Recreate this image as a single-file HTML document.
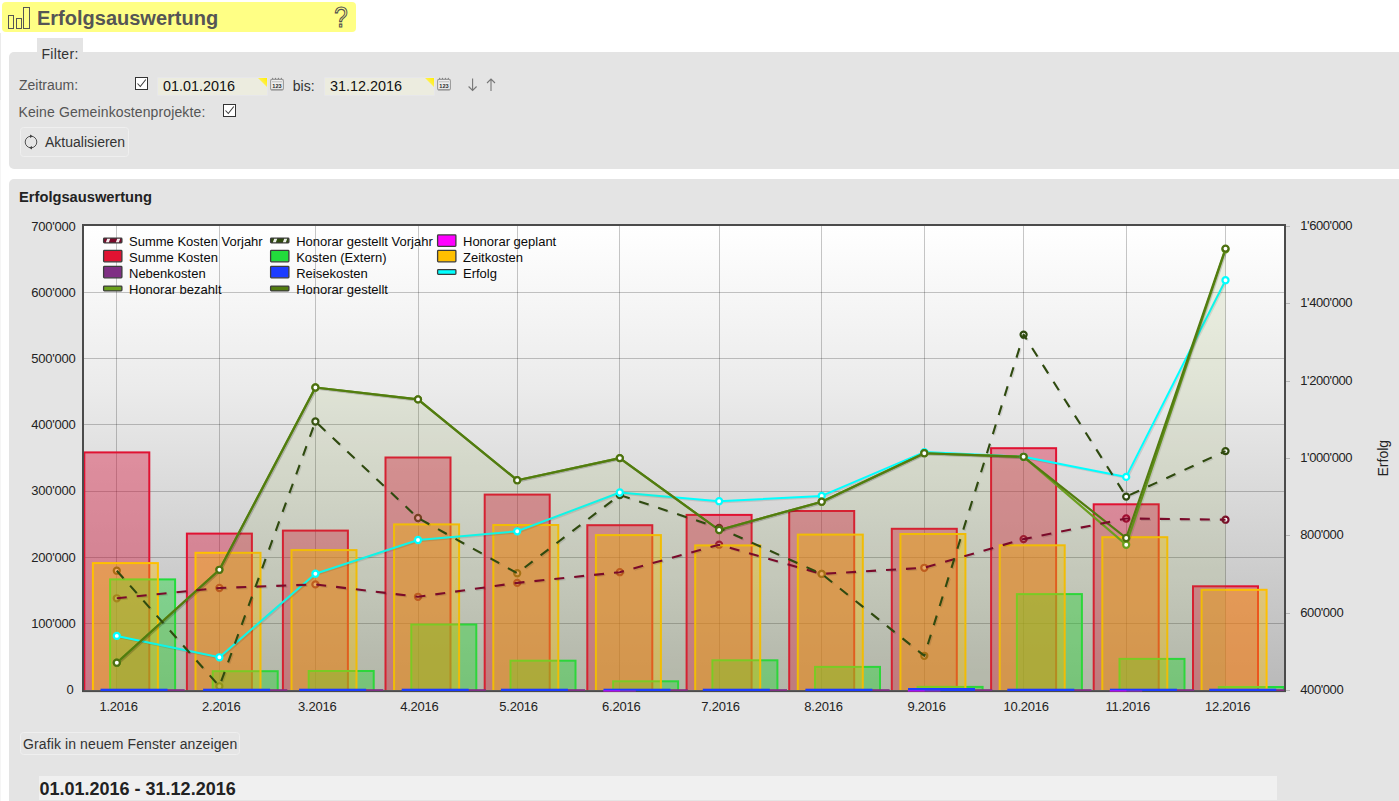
<!DOCTYPE html>
<html lang="de"><head><meta charset="utf-8"><title>Erfolgsauswertung</title>
<style>
html,body{margin:0;padding:0;background:#fff;}
body{width:1399px;height:801px;overflow:hidden;position:relative;font-family:"Liberation Sans", sans-serif;font-size:14px;color:#555;}
.abs{position:absolute;}
.hdr{left:2px;top:2px;width:354px;height:30px;background:#ffff85;border-radius:4px;}
.hdr h1{position:absolute;left:35px;top:4.5px;margin:0;font-size:20px;line-height:23px;font-weight:bold;color:#555;white-space:nowrap;}
.tab{left:37px;top:38px;width:46px;height:16px;background:#e4e4e4;}
.panel{left:9px;background:#e4e4e4;border-radius:5px 0 0 5px;right:0;}
.lbl{white-space:nowrap;line-height:16px;}
.inp{background:#ececdf;height:17.3px;width:109.3px;box-shadow:0 0 0 0.6px #e9e9ee;color:#111;line-height:18px;font-size:14.4px;}
.inp span{position:absolute;left:4.8px;top:-0.7px;}
.inp i{position:absolute;right:0;top:0;width:9.6px;height:9.2px;background:linear-gradient(to bottom left,#ffee00 0%,#fff04a 49%,transparent 51%);}
.cb{width:11px;height:11px;border:1px solid #333;background:#fff;}
.btn{border:1px solid #efefef;border-radius:3.5px;background:#e5e5e5;color:#333;white-space:nowrap;box-sizing:border-box;}
</style></head><body>
<div class="abs" style="left:0;top:33px;width:1px;height:67px;background:#ebebeb"></div><div class="abs" style="left:0;top:100px;width:1px;height:701px;background:#f5f5f5"></div>
<div class="abs hdr">
<svg class="abs" style="left:5px;top:4px" width="26" height="24" viewBox="0 0 26 24"><g fill="none" stroke="#555" stroke-width="1"><rect x="1.5" y="9.5" width="5" height="13"/><rect x="9.5" y="12.5" width="5" height="10"/><rect x="16.5" y="1.5" width="6" height="21"/></g></svg>
<h1>Erfolgsauswertung</h1>
<svg class="abs" style="left:328px;top:1px;overflow:visible" width="24" height="29" viewBox="0 0 24 29"><text transform="translate(10.9,23.6) scale(0.82,1.0)" text-anchor="middle" font-family='"Liberation Sans", sans-serif' font-size="29.5" fill="none" stroke="#505050" stroke-width="1.15">?</text></svg>
</div>
<div class="abs tab"></div>
<div class="abs panel" style="top:52px;height:116.7px"></div>
<div class="abs lbl" style="left:41.5px;top:46px;color:#333;letter-spacing:0.3px">Filter:</div>
<div class="abs lbl" style="left:19px;top:77px">Zeitraum:</div>
<div class="abs cb" style="left:135px;top:77px"><svg width="11" height="11" viewBox="0 0 11 11" style="display:block"><path d="M1.5 5.5 L4.3 8.5 L9.8 1.5" fill="none" stroke="#3a3a3a" stroke-width="1.05"/></svg></div>
<div class="abs inp" style="left:158.2px;top:77.9px"><span>01.01.2016</span><i></i></div>
<svg class="abs cal" style="left:270px;top:77px" width="14" height="14" viewBox="0 0 14 14"><path d="M1.8 2.6l0.9-2.2l0.9 2.2zM4.6 2.6l0.9-2.2l0.9 2.2zM7.5 2.6l0.9-2.2l0.9 2.2zM10.4 2.6l0.9-2.2l0.9 2.2z" fill="#666"/><rect x="0.6" y="2.4" width="12.8" height="10.6" rx="1.4" fill="#efefef" stroke="#9a9a9a" stroke-width="1.1"/><path d="M1.2 12.6h11.6" stroke="#9a9a9a" stroke-width="1.4"/><path d="M2 4.8h10" stroke="#b5b5b5" stroke-width="0.9"/><text x="7" y="10.9" text-anchor="middle" font-family='"Liberation Sans", sans-serif' font-size="5.6" font-weight="bold" fill="#2a2a2a">123</text></svg>
<div class="abs lbl" style="left:292.8px;top:78px;color:#333">bis:</div>
<div class="abs inp" style="left:325.2px;top:77.9px"><span>31.12.2016</span><i></i></div>
<svg class="abs cal" style="left:437px;top:77px" width="14" height="14" viewBox="0 0 14 14"><path d="M1.8 2.6l0.9-2.2l0.9 2.2zM4.6 2.6l0.9-2.2l0.9 2.2zM7.5 2.6l0.9-2.2l0.9 2.2zM10.4 2.6l0.9-2.2l0.9 2.2z" fill="#666"/><rect x="0.6" y="2.4" width="12.8" height="10.6" rx="1.4" fill="#efefef" stroke="#9a9a9a" stroke-width="1.1"/><path d="M1.2 12.6h11.6" stroke="#9a9a9a" stroke-width="1.4"/><path d="M2 4.8h10" stroke="#b5b5b5" stroke-width="0.9"/><text x="7" y="10.9" text-anchor="middle" font-family='"Liberation Sans", sans-serif' font-size="5.6" font-weight="bold" fill="#2a2a2a">123</text></svg>
<svg class="abs" style="left:466px;top:77px" width="32" height="16" viewBox="0 0 32 16"><g fill="none" stroke="#777" stroke-width="1.1"><path d="M6.6 1.5v12M2.6 9.5l4 4l4-4"/><path d="M25 14V2M21 6l4-4l4 4"/></g></svg>
<div class="abs lbl" style="left:18.5px;top:103.5px;letter-spacing:0.12px">Keine Gemeinkostenprojekte:</div>
<div class="abs cb" style="left:223px;top:104px"><svg width="11" height="11" viewBox="0 0 11 11" style="display:block"><path d="M1.5 5.5 L4.3 8.5 L9.8 1.5" fill="none" stroke="#3a3a3a" stroke-width="1.05"/></svg></div>
<div class="abs btn" style="left:20px;top:127px;width:109px;height:30px"><svg class="abs" style="left:2px;top:5.7px" width="16" height="16" viewBox="0 0 16 16"><circle cx="8" cy="8" r="5.8" fill="none" stroke="#4a4a4a" stroke-width="0.95"/><path d="M7.0 0.5l2.9 1.8l-2.9 1.8z M9.0 11.9l-2.9 1.8l2.9 1.8z" fill="#444"/></svg><span class="abs" style="left:24px;top:6px;line-height:16px">Aktualisieren</span></div>
<div class="abs panel" style="top:179px;height:640px"></div>
<div class="abs lbl" style="left:19px;top:189px;font-weight:bold;color:#222;font-size:14.7px">Erfolgsauswertung</div>
<svg width="1399" height="801" viewBox="0 0 1399 801" style="position:absolute;left:0;top:0" font-family='"Liberation Sans", sans-serif' font-size="12">
<defs>
<linearGradient id="bg" x1="0" y1="0" x2="0" y2="1">
<stop offset="0" stop-color="#ffffff"/><stop offset="0.35" stop-color="#ebebeb"/><stop offset="1" stop-color="#b9b9b9"/>
</linearGradient>
<clipPath id="clip"><rect x="84" y="226" width="1200" height="464.2"/></clipPath>
</defs>
<rect x="84.0" y="226.0" width="1200.0" height="464.20000000000005" fill="url(#bg)"/>
<g stroke="#000" stroke-opacity="0.22" stroke-width="1"><line x1="116.5" y1="226.0" x2="116.5" y2="690.2"/><line x1="219.5" y1="226.0" x2="219.5" y2="690.2"/><line x1="315.5" y1="226.0" x2="315.5" y2="690.2"/><line x1="418.5" y1="226.0" x2="418.5" y2="690.2"/><line x1="517.5" y1="226.0" x2="517.5" y2="690.2"/><line x1="619.5" y1="226.0" x2="619.5" y2="690.2"/><line x1="719.5" y1="226.0" x2="719.5" y2="690.2"/><line x1="821.5" y1="226.0" x2="821.5" y2="690.2"/><line x1="924.5" y1="226.0" x2="924.5" y2="690.2"/><line x1="1023.5" y1="226.0" x2="1023.5" y2="690.2"/><line x1="1126.5" y1="226.0" x2="1126.5" y2="690.2"/><line x1="1225.5" y1="226.0" x2="1225.5" y2="690.2"/><line x1="84.0" y1="292.5" x2="1284.0" y2="292.5"/><line x1="84.0" y1="358.5" x2="1284.0" y2="358.5"/><line x1="84.0" y1="424.5" x2="1284.0" y2="424.5"/><line x1="84.0" y1="491.5" x2="1284.0" y2="491.5"/><line x1="84.0" y1="557.5" x2="1284.0" y2="557.5"/><line x1="84.0" y1="623.5" x2="1284.0" y2="623.5"/></g>
<g stroke="#b5b5b5" stroke-width="1" shape-rendering="crispEdges"><line x1="1286" y1="226.5" x2="1290" y2="226.5"/><line x1="1286" y1="303.5" x2="1290" y2="303.5"/><line x1="1286" y1="381.5" x2="1290" y2="381.5"/><line x1="1286" y1="458.5" x2="1290" y2="458.5"/><line x1="1286" y1="535.5" x2="1290" y2="535.5"/><line x1="1286" y1="613.5" x2="1290" y2="613.5"/><line x1="1286" y1="690.5" x2="1290" y2="690.5"/></g>
<g clip-path="url(#clip)">
<circle cx="116.8" cy="598.3" r="3.05" fill="#fff" stroke="#7a0a2a" stroke-width="2.2"/>
<circle cx="219.4" cy="588.0" r="3.05" fill="#fff" stroke="#7a0a2a" stroke-width="2.2"/>
<circle cx="315.4" cy="584.4" r="3.05" fill="#fff" stroke="#7a0a2a" stroke-width="2.2"/>
<circle cx="418.0" cy="596.8" r="3.05" fill="#fff" stroke="#7a0a2a" stroke-width="2.2"/>
<circle cx="517.2" cy="582.9" r="3.05" fill="#fff" stroke="#7a0a2a" stroke-width="2.2"/>
<circle cx="619.8" cy="572.2" r="3.05" fill="#fff" stroke="#7a0a2a" stroke-width="2.2"/>
<circle cx="719.1" cy="544.7" r="3.05" fill="#fff" stroke="#7a0a2a" stroke-width="2.2"/>
<circle cx="821.7" cy="573.9" r="3.05" fill="#fff" stroke="#7a0a2a" stroke-width="2.2"/>
<circle cx="924.3" cy="567.8" r="3.05" fill="#fff" stroke="#7a0a2a" stroke-width="2.2"/>
<circle cx="1023.6" cy="539.1" r="3.05" fill="#fff" stroke="#7a0a2a" stroke-width="2.2"/>
<circle cx="1126.2" cy="518.5" r="3.05" fill="#fff" stroke="#7a0a2a" stroke-width="2.2"/>
<circle cx="1225.5" cy="519.7" r="3.05" fill="#fff" stroke="#7a0a2a" stroke-width="2.2"/>
<circle cx="116.8" cy="570.7" r="3.05" fill="#fff" stroke="#2f4a0f" stroke-width="2.2"/>
<circle cx="219.4" cy="686.3" r="3.05" fill="#fff" stroke="#2f4a0f" stroke-width="2.2"/>
<circle cx="315.4" cy="421.5" r="3.05" fill="#fff" stroke="#2f4a0f" stroke-width="2.2"/>
<circle cx="418.0" cy="518.0" r="3.05" fill="#fff" stroke="#2f4a0f" stroke-width="2.2"/>
<circle cx="517.2" cy="573.2" r="3.05" fill="#fff" stroke="#2f4a0f" stroke-width="2.2"/>
<circle cx="619.8" cy="495.0" r="3.05" fill="#fff" stroke="#2f4a0f" stroke-width="2.2"/>
<circle cx="719.1" cy="528.0" r="3.05" fill="#fff" stroke="#2f4a0f" stroke-width="2.2"/>
<circle cx="821.7" cy="573.9" r="3.05" fill="#fff" stroke="#2f4a0f" stroke-width="2.2"/>
<circle cx="924.3" cy="655.8" r="3.05" fill="#fff" stroke="#2f4a0f" stroke-width="2.2"/>
<circle cx="1023.6" cy="334.6" r="3.05" fill="#fff" stroke="#2f4a0f" stroke-width="2.2"/>
<circle cx="1126.2" cy="496.6" r="3.05" fill="#fff" stroke="#2f4a0f" stroke-width="2.2"/>
<circle cx="1225.5" cy="451.1" r="3.05" fill="#fff" stroke="#2f4a0f" stroke-width="2.2"/>
<rect x="84.3" y="452.4" width="65.0" height="240.4" fill="#dc143c" fill-opacity="0.4" stroke="#e01232" stroke-width="2"/>
<rect x="186.9" y="533.6" width="65.0" height="159.2" fill="#dc143c" fill-opacity="0.4" stroke="#e01232" stroke-width="2"/>
<rect x="282.9" y="530.6" width="65.0" height="162.2" fill="#dc143c" fill-opacity="0.4" stroke="#e01232" stroke-width="2"/>
<rect x="385.5" y="457.5" width="65.0" height="235.3" fill="#dc143c" fill-opacity="0.4" stroke="#e01232" stroke-width="2"/>
<rect x="484.7" y="494.6" width="65.0" height="198.2" fill="#dc143c" fill-opacity="0.4" stroke="#e01232" stroke-width="2"/>
<rect x="587.3" y="525.2" width="65.0" height="167.6" fill="#dc143c" fill-opacity="0.4" stroke="#e01232" stroke-width="2"/>
<rect x="686.6" y="514.9" width="65.0" height="177.9" fill="#dc143c" fill-opacity="0.4" stroke="#e01232" stroke-width="2"/>
<rect x="789.2" y="511.0" width="65.0" height="181.8" fill="#dc143c" fill-opacity="0.4" stroke="#e01232" stroke-width="2"/>
<rect x="891.8" y="528.8" width="65.0" height="164.0" fill="#dc143c" fill-opacity="0.4" stroke="#e01232" stroke-width="2"/>
<rect x="991.1" y="448.2" width="65.0" height="244.6" fill="#dc143c" fill-opacity="0.4" stroke="#e01232" stroke-width="2"/>
<rect x="1093.7" y="504.3" width="65.0" height="188.5" fill="#dc143c" fill-opacity="0.4" stroke="#e01232" stroke-width="2"/>
<rect x="1193.0" y="586.3" width="65.0" height="106.5" fill="#dc143c" fill-opacity="0.4" stroke="#e01232" stroke-width="2"/>
<rect x="110.1" y="579.4" width="65.0" height="113.4" fill="#14dc32" fill-opacity="0.4" stroke="#22dc3c" stroke-width="2"/>
<rect x="212.7" y="671.2" width="65.0" height="21.6" fill="#14dc32" fill-opacity="0.4" stroke="#22dc3c" stroke-width="2"/>
<rect x="308.7" y="671.0" width="65.0" height="21.8" fill="#14dc32" fill-opacity="0.4" stroke="#22dc3c" stroke-width="2"/>
<rect x="411.3" y="624.5" width="65.0" height="68.3" fill="#14dc32" fill-opacity="0.4" stroke="#22dc3c" stroke-width="2"/>
<rect x="510.5" y="660.7" width="65.0" height="32.1" fill="#14dc32" fill-opacity="0.4" stroke="#22dc3c" stroke-width="2"/>
<rect x="613.1" y="681.3" width="65.0" height="11.5" fill="#14dc32" fill-opacity="0.4" stroke="#22dc3c" stroke-width="2"/>
<rect x="712.4" y="660.3" width="65.0" height="32.5" fill="#14dc32" fill-opacity="0.4" stroke="#22dc3c" stroke-width="2"/>
<rect x="815.0" y="666.9" width="65.0" height="25.9" fill="#14dc32" fill-opacity="0.4" stroke="#22dc3c" stroke-width="2"/>
<rect x="917.6" y="686.9" width="65.0" height="5.9" fill="#14dc32" fill-opacity="0.4" stroke="#22dc3c" stroke-width="2"/>
<rect x="1016.9" y="594.1" width="65.0" height="98.7" fill="#14dc32" fill-opacity="0.4" stroke="#22dc3c" stroke-width="2"/>
<rect x="1119.5" y="658.9" width="65.0" height="33.9" fill="#14dc32" fill-opacity="0.4" stroke="#22dc3c" stroke-width="2"/>
<rect x="1218.8" y="687.0" width="65.0" height="5.8" fill="#14dc32" fill-opacity="0.4" stroke="#22dc3c" stroke-width="2"/>
<rect x="92.9" y="563.1" width="65.0" height="129.7" fill="#ffbe00" fill-opacity="0.4" stroke="#ffc000" stroke-width="2"/>
<rect x="195.5" y="552.8" width="65.0" height="140.0" fill="#ffbe00" fill-opacity="0.4" stroke="#ffc000" stroke-width="2"/>
<rect x="291.5" y="550.1" width="65.0" height="142.7" fill="#ffbe00" fill-opacity="0.4" stroke="#ffc000" stroke-width="2"/>
<rect x="394.1" y="524.4" width="65.0" height="168.4" fill="#ffbe00" fill-opacity="0.4" stroke="#ffc000" stroke-width="2"/>
<rect x="493.3" y="525.0" width="65.0" height="167.8" fill="#ffbe00" fill-opacity="0.4" stroke="#ffc000" stroke-width="2"/>
<rect x="595.9" y="535.1" width="65.0" height="157.7" fill="#ffbe00" fill-opacity="0.4" stroke="#ffc000" stroke-width="2"/>
<rect x="695.2" y="545.4" width="65.0" height="147.4" fill="#ffbe00" fill-opacity="0.4" stroke="#ffc000" stroke-width="2"/>
<rect x="797.8" y="534.6" width="65.0" height="158.2" fill="#ffbe00" fill-opacity="0.4" stroke="#ffc000" stroke-width="2"/>
<rect x="900.4" y="534.0" width="65.0" height="158.8" fill="#ffbe00" fill-opacity="0.4" stroke="#ffc000" stroke-width="2"/>
<rect x="999.7" y="545.3" width="65.0" height="147.5" fill="#ffbe00" fill-opacity="0.4" stroke="#ffc000" stroke-width="2"/>
<rect x="1102.3" y="537.2" width="65.0" height="155.6" fill="#ffbe00" fill-opacity="0.4" stroke="#ffc000" stroke-width="2"/>
<rect x="1201.6" y="589.8" width="65.0" height="103.0" fill="#ffbe00" fill-opacity="0.4" stroke="#ffc000" stroke-width="2"/>
<polyline points="116.8,635.9 219.4,657.3 315.4,573.7 418.0,540.0 517.2,531.3 619.8,492.5 719.1,501.2 821.7,495.9 924.3,452.1 1023.6,456.8 1126.2,476.9 1225.5,280.2" fill="none" stroke="#000" stroke-opacity="0.10" stroke-width="2.0" transform="translate(1.2,1.2)" stroke-linejoin="round"/>
<polyline points="116.8,635.9 219.4,657.3 315.4,573.7 418.0,540.0 517.2,531.3 619.8,492.5 719.1,501.2 821.7,495.9 924.3,452.1 1023.6,456.8 1126.2,476.9 1225.5,280.2" fill="none" stroke="#00ffff" stroke-width="2.0" stroke-linejoin="round" stroke-linecap="butt"/>
<polygon points="116.8,662.7 219.4,569.8 315.4,387.5 418.0,399.4 517.2,480.2 619.8,458.1 719.1,530.0 821.7,501.7 924.3,453.2 1023.6,456.8 1126.2,544.8 1225.5,249.4 1225.5,690.2 116.8,690.2" fill="#8ca531" fill-opacity="0.06"/>
<polyline points="116.8,662.7 219.4,569.8 315.4,387.5 418.0,399.4 517.2,480.2 619.8,458.1 719.1,530.0 821.7,501.7 924.3,453.2 1023.6,456.8 1126.2,544.8 1225.5,249.4" fill="none" stroke="#000" stroke-opacity="0.10" stroke-width="2.15" transform="translate(1.2,1.2)" stroke-linejoin="round"/>
<polyline points="116.8,662.7 219.4,569.8 315.4,387.5 418.0,399.4 517.2,480.2 619.8,458.1 719.1,530.0 821.7,501.7 924.3,453.2 1023.6,456.8 1126.2,544.8 1225.5,249.4" fill="none" stroke="#6aa01c" stroke-width="2.15" stroke-linejoin="round" stroke-linecap="butt"/>
<polygon points="116.8,662.7 219.4,569.8 315.4,387.5 418.0,399.4 517.2,480.2 619.8,458.1 719.1,530.0 821.7,501.7 924.3,453.2 1023.6,456.8 1126.2,538.0 1225.5,248.6 1225.5,690.2 116.8,690.2" fill="#8ca531" fill-opacity="0.06"/>
<polyline points="116.8,662.7 219.4,569.8 315.4,387.5 418.0,399.4 517.2,480.2 619.8,458.1 719.1,530.0 821.7,501.7 924.3,453.2 1023.6,456.8 1126.2,538.0 1225.5,248.6" fill="none" stroke="#000" stroke-opacity="0.10" stroke-width="2.15" transform="translate(1.2,1.2)" stroke-linejoin="round"/>
<polyline points="116.8,662.7 219.4,569.8 315.4,387.5 418.0,399.4 517.2,480.2 619.8,458.1 719.1,530.0 821.7,501.7 924.3,453.2 1023.6,456.8 1126.2,538.0 1225.5,248.6" fill="none" stroke="#527c0f" stroke-width="2.15" stroke-linejoin="round" stroke-linecap="butt"/>
<polyline points="116.8,598.3 219.4,588.0 315.4,584.4 418.0,596.8 517.2,582.9 619.8,572.2 719.1,544.7 821.7,573.9 924.3,567.8 1023.6,539.1 1126.2,518.5 1225.5,519.7" fill="none" stroke="#000" stroke-opacity="0.10" stroke-width="2.1" transform="translate(1.2,1.2)" stroke-dasharray="10 10" stroke-linejoin="round"/>
<polyline points="116.8,598.3 219.4,588.0 315.4,584.4 418.0,596.8 517.2,582.9 619.8,572.2 719.1,544.7 821.7,573.9 924.3,567.8 1023.6,539.1 1126.2,518.5 1225.5,519.7" fill="none" stroke="#7a0a2a" stroke-width="2.1" stroke-dasharray="10 10" stroke-linejoin="round" stroke-linecap="butt"/>
<polyline points="116.8,570.7 219.4,686.3 315.4,421.5 418.0,518.0 517.2,573.2 619.8,495.0 719.1,528.0 821.7,573.9 924.3,655.8 1023.6,334.6 1126.2,496.6 1225.5,451.1" fill="none" stroke="#000" stroke-opacity="0.10" stroke-width="2.1" transform="translate(1.2,1.2)" stroke-dasharray="10 10" stroke-linejoin="round"/>
<polyline points="116.8,570.7 219.4,686.3 315.4,421.5 418.0,518.0 517.2,573.2 619.8,495.0 719.1,528.0 821.7,573.9 924.3,655.8 1023.6,334.6 1126.2,496.6 1225.5,451.1" fill="none" stroke="#2f4a0f" stroke-width="2.1" stroke-dasharray="10 10" stroke-linejoin="round" stroke-linecap="butt"/>
<circle cx="116.8" cy="635.9" r="3.05" fill="#fff" stroke="#00ffff" stroke-width="2.2"/>
<circle cx="219.4" cy="657.3" r="3.05" fill="#fff" stroke="#00ffff" stroke-width="2.2"/>
<circle cx="315.4" cy="573.7" r="3.05" fill="#fff" stroke="#00ffff" stroke-width="2.2"/>
<circle cx="418.0" cy="540.0" r="3.05" fill="#fff" stroke="#00ffff" stroke-width="2.2"/>
<circle cx="517.2" cy="531.3" r="3.05" fill="#fff" stroke="#00ffff" stroke-width="2.2"/>
<circle cx="619.8" cy="492.5" r="3.05" fill="#fff" stroke="#00ffff" stroke-width="2.2"/>
<circle cx="719.1" cy="501.2" r="3.05" fill="#fff" stroke="#00ffff" stroke-width="2.2"/>
<circle cx="821.7" cy="495.9" r="3.05" fill="#fff" stroke="#00ffff" stroke-width="2.2"/>
<circle cx="924.3" cy="452.1" r="3.05" fill="#fff" stroke="#00ffff" stroke-width="2.2"/>
<circle cx="1023.6" cy="456.8" r="3.05" fill="#fff" stroke="#00ffff" stroke-width="2.2"/>
<circle cx="1126.2" cy="476.9" r="3.05" fill="#fff" stroke="#00ffff" stroke-width="2.2"/>
<circle cx="1225.5" cy="280.2" r="3.05" fill="#fff" stroke="#00ffff" stroke-width="2.2"/>
<circle cx="116.8" cy="662.7" r="3.05" fill="#fff" stroke="#6aa01c" stroke-width="2.2"/>
<circle cx="219.4" cy="569.8" r="3.05" fill="#fff" stroke="#6aa01c" stroke-width="2.2"/>
<circle cx="315.4" cy="387.5" r="3.05" fill="#fff" stroke="#6aa01c" stroke-width="2.2"/>
<circle cx="418.0" cy="399.4" r="3.05" fill="#fff" stroke="#6aa01c" stroke-width="2.2"/>
<circle cx="517.2" cy="480.2" r="3.05" fill="#fff" stroke="#6aa01c" stroke-width="2.2"/>
<circle cx="619.8" cy="458.1" r="3.05" fill="#fff" stroke="#6aa01c" stroke-width="2.2"/>
<circle cx="719.1" cy="530.0" r="3.05" fill="#fff" stroke="#6aa01c" stroke-width="2.2"/>
<circle cx="821.7" cy="501.7" r="3.05" fill="#fff" stroke="#6aa01c" stroke-width="2.2"/>
<circle cx="924.3" cy="453.2" r="3.05" fill="#fff" stroke="#6aa01c" stroke-width="2.2"/>
<circle cx="1023.6" cy="456.8" r="3.05" fill="#fff" stroke="#6aa01c" stroke-width="2.2"/>
<circle cx="1126.2" cy="544.8" r="3.05" fill="#fff" stroke="#6aa01c" stroke-width="2.2"/>
<circle cx="1225.5" cy="249.4" r="3.05" fill="#fff" stroke="#6aa01c" stroke-width="2.2"/>
<circle cx="116.8" cy="662.7" r="3.05" fill="#fff" stroke="#4d7010" stroke-width="2.2"/>
<circle cx="219.4" cy="569.8" r="3.05" fill="#fff" stroke="#4d7010" stroke-width="2.2"/>
<circle cx="315.4" cy="387.5" r="3.05" fill="#fff" stroke="#4d7010" stroke-width="2.2"/>
<circle cx="418.0" cy="399.4" r="3.05" fill="#fff" stroke="#4d7010" stroke-width="2.2"/>
<circle cx="517.2" cy="480.2" r="3.05" fill="#fff" stroke="#4d7010" stroke-width="2.2"/>
<circle cx="619.8" cy="458.1" r="3.05" fill="#fff" stroke="#4d7010" stroke-width="2.2"/>
<circle cx="719.1" cy="530.0" r="3.05" fill="#fff" stroke="#4d7010" stroke-width="2.2"/>
<circle cx="821.7" cy="501.7" r="3.05" fill="#fff" stroke="#4d7010" stroke-width="2.2"/>
<circle cx="924.3" cy="453.2" r="3.05" fill="#fff" stroke="#4d7010" stroke-width="2.2"/>
<circle cx="1023.6" cy="456.8" r="3.05" fill="#fff" stroke="#4d7010" stroke-width="2.2"/>
<circle cx="1126.2" cy="538.0" r="3.05" fill="#fff" stroke="#4d7010" stroke-width="2.2"/>
<circle cx="1225.5" cy="248.6" r="3.05" fill="#fff" stroke="#4d7010" stroke-width="2.2"/>
</g>
<rect x="83" y="225" width="1202" height="466.1" fill="none" stroke="#4b4b4b" stroke-width="2"/>
<rect x="117.7" y="689.2" width="67.0" height="1.8" fill="#7f2f84"/><rect x="220.3" y="689.2" width="67.0" height="1.8" fill="#7f2f84"/><rect x="316.3" y="689.2" width="67.0" height="1.8" fill="#7f2f84"/><rect x="418.9" y="689.2" width="67.0" height="1.8" fill="#7f2f84"/><rect x="518.1" y="689.2" width="67.0" height="1.8" fill="#7f2f84"/><rect x="620.7" y="689.2" width="67.0" height="1.8" fill="#7f2f84"/><rect x="720.0" y="689.2" width="67.0" height="1.8" fill="#7f2f84"/><rect x="822.6" y="689.2" width="67.0" height="1.8" fill="#7f2f84"/><rect x="925.2" y="689.2" width="67.0" height="1.8" fill="#7f2f84"/><rect x="1024.5" y="689.2" width="67.0" height="1.8" fill="#7f2f84"/><rect x="1127.1" y="689.2" width="67.0" height="1.8" fill="#7f2f84"/><rect x="1226.4" y="689.2" width="57.6" height="1.8" fill="#7f2f84"/>
<rect x="100.5" y="688.7" width="67.0" height="2.3" fill="#1c3cff"/><rect x="203.1" y="688.7" width="67.0" height="2.3" fill="#1c3cff"/><rect x="299.1" y="688.7" width="67.0" height="2.3" fill="#1c3cff"/><rect x="401.7" y="688.7" width="67.0" height="2.3" fill="#1c3cff"/><rect x="500.9" y="688.7" width="67.0" height="2.3" fill="#1c3cff"/><rect x="603.5" y="688.7" width="67.0" height="2.3" fill="#1c3cff"/><rect x="702.8" y="688.7" width="67.0" height="2.3" fill="#1c3cff"/><rect x="805.4" y="688.7" width="67.0" height="2.3" fill="#1c3cff"/><rect x="908.0" y="688.0" width="67.0" height="3.0" fill="#1c3cff"/><rect x="1007.3" y="688.7" width="67.0" height="2.3" fill="#1c3cff"/><rect x="1109.9" y="688.7" width="67.0" height="2.3" fill="#1c3cff"/><rect x="1209.2" y="688.7" width="67.0" height="2.3" fill="#1c3cff"/>
<rect x="603.3" y="690.4" width="17" height="1.1" fill="#e000ff"/><rect x="620.3" y="690.5" width="15.5" height="1" fill="#9a28c8"/>
<rect x="907.8" y="690.4" width="17" height="1.1" fill="#e000ff"/><rect x="924.8" y="690.5" width="15.5" height="1" fill="#9a28c8"/>
<rect x="1109.7" y="690.4" width="17" height="1.1" fill="#e000ff"/><rect x="1126.7" y="690.5" width="15.5" height="1" fill="#9a28c8"/>
<g fill="#222" font-size="13" letter-spacing="-0.23"><text x="75.6" y="230.5" text-anchor="end">700'000</text>
<text x="75.6" y="296.7" text-anchor="end">600'000</text>
<text x="75.6" y="362.9" text-anchor="end">500'000</text>
<text x="75.6" y="429.1" text-anchor="end">400'000</text>
<text x="75.6" y="495.3" text-anchor="end">300'000</text>
<text x="75.6" y="561.5" text-anchor="end">200'000</text>
<text x="75.6" y="627.7" text-anchor="end">100'000</text>
<text x="73.6" y="693.9" text-anchor="end">0</text>
<text x="1300.3" y="229.7" letter-spacing="-0.42">1'600'000</text>
<text x="1300.3" y="307.1" letter-spacing="-0.42">1'400'000</text>
<text x="1300.3" y="384.5" letter-spacing="-0.42">1'200'000</text>
<text x="1300.3" y="461.9" letter-spacing="-0.42">1'000'000</text>
<text x="1300.3" y="539.3" letter-spacing="-0.42">800'000</text>
<text x="1300.3" y="616.7" letter-spacing="-0.42">600'000</text>
<text x="1300.3" y="694.1" letter-spacing="-0.42">400'000</text>
<text x="118.6" y="711.3" text-anchor="middle">1.2016</text>
<text x="221.2" y="711.3" text-anchor="middle">2.2016</text>
<text x="317.3" y="711.3" text-anchor="middle">3.2016</text>
<text x="419.4" y="711.3" text-anchor="middle">4.2016</text>
<text x="518.5" y="711.3" text-anchor="middle">5.2016</text>
<text x="621.3" y="711.3" text-anchor="middle">6.2016</text>
<text x="720.5" y="711.3" text-anchor="middle">7.2016</text>
<text x="823.5" y="711.3" text-anchor="middle">8.2016</text>
<text x="926.6" y="711.3" text-anchor="middle">9.2016</text>
<text x="1026.1" y="711.3" text-anchor="middle">10.2016</text>
<text x="1127.8" y="711.3" text-anchor="middle">11.2016</text>
<text x="1227.6" y="711.3" text-anchor="middle">12.2016</text>
<text transform="translate(1388.3,458.2) rotate(-90)" text-anchor="middle" font-size="14" letter-spacing="0">Erfolg</text></g>
<rect x="103.6" y="238.1" width="18.3" height="4.8" rx="0.8" fill="#7a0a2a" stroke="#3c3c3c" stroke-width="1.3"/>
<path d="M105.9 242.3l1.3-3.6h3l-1.3 3.6z M115.9 242.3l1.3-3.6h3l-1.3 3.6z" fill="#fff" fill-opacity="0.92"/>
<text x="129.0" y="245.6" fill="#0a0a0a" font-size="13">Summe Kosten Vorjahr</text>
<rect x="103.6" y="250.4" width="18.3" height="11.4" rx="0.8" fill="#e01232" stroke="#3c3c3c" stroke-width="1.3"/>
<text x="129.0" y="261.6" fill="#0a0a0a" font-size="13">Summe Kosten</text>
<rect x="103.6" y="266.4" width="18.3" height="11.4" rx="0.8" fill="#7f2f84" stroke="#3c3c3c" stroke-width="1.3"/>
<text x="129.0" y="277.6" fill="#0a0a0a" font-size="13">Nebenkosten</text>
<rect x="103.6" y="286.1" width="18.3" height="4.8" rx="0.8" fill="#6aa01c" stroke="#3c3c3c" stroke-width="1.3"/>
<text x="129.0" y="293.6" fill="#0a0a0a" font-size="13">Honorar bezahlt</text>
<rect x="270.6" y="238.1" width="18.3" height="4.8" rx="0.8" fill="#2f4a0f" stroke="#3c3c3c" stroke-width="1.3"/>
<path d="M272.9 242.3l1.3-3.6h3l-1.3 3.6z M282.9 242.3l1.3-3.6h3l-1.3 3.6z" fill="#fff" fill-opacity="0.92"/>
<text x="296.2" y="245.6" fill="#0a0a0a" font-size="13">Honorar gestellt Vorjahr</text>
<rect x="270.6" y="250.4" width="18.3" height="11.4" rx="0.8" fill="#22dc3c" stroke="#3c3c3c" stroke-width="1.3"/>
<text x="296.2" y="261.6" fill="#0a0a0a" font-size="13">Kosten (Extern)</text>
<rect x="270.6" y="266.4" width="18.3" height="11.4" rx="0.8" fill="#1c3cff" stroke="#3c3c3c" stroke-width="1.3"/>
<text x="296.2" y="277.6" fill="#0a0a0a" font-size="13">Reisekosten</text>
<rect x="270.6" y="286.1" width="18.3" height="4.8" rx="0.8" fill="#527c0f" stroke="#3c3c3c" stroke-width="1.3"/>
<text x="296.2" y="293.6" fill="#0a0a0a" font-size="13">Honorar gestellt</text>
<rect x="437.6" y="234.9" width="18.3" height="11.4" rx="0.8" fill="#ff00ff" stroke="#3c3c3c" stroke-width="1.3"/>
<text x="463.0" y="245.6" fill="#0a0a0a" font-size="13">Honorar geplant</text>
<rect x="437.6" y="250.4" width="18.3" height="11.4" rx="0.8" fill="#ffc000" stroke="#3c3c3c" stroke-width="1.3"/>
<text x="463.0" y="261.6" fill="#0a0a0a" font-size="13">Zeitkosten</text>
<rect x="437.6" y="269.6" width="18.3" height="4.8" rx="0.8" fill="#00ffff" stroke="#3c3c3c" stroke-width="1.3"/>
<text x="463.0" y="277.6" fill="#0a0a0a" font-size="13">Erfolg</text>
</svg>
<div class="abs btn" style="left:20px;top:732px;width:220px;height:23px"><span class="abs" style="left:2px;top:2.5px;line-height:16px;letter-spacing:0.11px">Grafik in neuem Fenster anzeigen</span></div>
<div class="abs" style="left:38.5px;top:776px;width:1238.5px;height:23.5px;background:#f0f0f0"></div>
<div class="abs" style="left:39.5px;top:779px;font-size:18px;line-height:21px;font-weight:bold;color:#222;white-space:nowrap">01.01.2016 - 31.12.2016</div>
</body></html>
